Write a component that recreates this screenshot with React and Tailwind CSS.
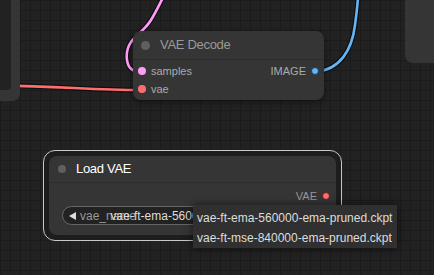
export default function App() {
    return (
        <div className="relative w-[434px] h-[275px] overflow-hidden bg-[#222222] bg-[image:linear-gradient(to_right,#1b1b1b_1px,transparent_1px),linear-gradient(to_bottom,#1b1b1b_1px,transparent_1px)] bg-[size:10px_10px] font-['Liberation_Sans',Arial,sans-serif]">
            {/* wires, drawn under the nodes */}
            <svg className="absolute inset-0" width="434" height="275">
                <g fill="none" strokeLinecap="round">
                    <path d="M166 -8 C160 3, 157 10, 151 20 C145 30, 135 36, 131 42 C127 48, 126 53, 127 60 C128 68, 133 72, 141 72" stroke="#000" strokeOpacity="0.55" strokeWidth="5" />
                    <path d="M166 -8 C160 3, 157 10, 151 20 C145 30, 135 36, 131 42 C127 48, 126 53, 127 60 C128 68, 133 72, 141 72" stroke="#ff9cf9" strokeWidth="2.6" />
                    <path d="M315 72 C340 70, 352 50, 355 25 C357 10, 358 0, 358 -5" stroke="#000" strokeOpacity="0.55" strokeWidth="5" />
                    <path d="M315 72 C340 70, 352 50, 355 25 C357 10, 358 0, 358 -5" stroke="#64b5f6" strokeWidth="2.6" />
                    <path d="M0 85.6 C60 86, 90 90, 141 90" stroke="#000" strokeOpacity="0.55" strokeWidth="5" />
                    <path d="M0 85.6 C60 86, 90 90, 141 90" stroke="#ff6e6e" strokeWidth="2.6" />
                </g>
            </svg>

            {/* node cut off on the left */}
            <div className="absolute left-[-10px] top-[-10px] w-[30px] h-[111px] flex pr-[9px] pb-[11px] rounded-br-[8px] bg-[#353535]">
                <div className="flex-1 rounded-br-[4px] bg-[#222222]" />
            </div>

            {/* node cut off on the top right */}
            <div className="absolute left-[405px] top-[-10px] w-[40px] h-[73px] rounded-bl-[8px] bg-[#353535]" />

            {/* VAE Decode */}
            <div className="absolute left-[133px] top-[31px] w-[191px] h-[69px] flex flex-col rounded-[8px] bg-[#353535] shadow-[0_2px_6px_rgba(0,0,0,0.4)]">
                <div className="flex items-center h-[29px] border-b border-[#2d2d2d]">
                    <span className="ml-[8px] w-[9px] h-[9px] rounded-full bg-[#5f5f5f]" />
                    <span className="ml-[10px] text-[13px] tracking-[-0.3px] text-[#999999]">VAE Decode</span>
                </div>
                <div className="flex items-center justify-between h-[18px] mt-[2px]">
                    <div className="flex items-center">
                        <span className="ml-[5px] w-[8px] h-[8px] rounded-full bg-[#ff9cf9]" />
                        <span className="ml-[5px] text-[11px] text-[#aaaaaa]">samples</span>
                    </div>
                    <div className="flex items-center">
                        <span className="text-[11px] text-[#aaaaaa]">IMAGE</span>
                        <span className="ml-[5px] mr-[5px] w-[8px] h-[8px] rounded-full bg-[#64b5f6] border border-[#1d3b55]" />
                    </div>
                </div>
                <div className="flex items-center h-[18px]">
                    <span className="ml-[5px] w-[8px] h-[8px] rounded-full bg-[#ff6e6e]" />
                    <span className="ml-[5px] text-[11px] text-[#aaaaaa]">vae</span>
                </div>
            </div>

            {/* Load VAE (selected) */}
            <div className="absolute left-[43px] top-[150px] w-[299px] h-[91px] flex p-[5px] rounded-[12px] border border-[#c8c8c8] bg-[#1d1d1d]">
                <div className="flex-1 flex flex-col rounded-[8px] bg-[#353535]">
                    <div className="flex items-center h-[27px] border-b border-[#2d2d2d]">
                        <span className="ml-[9px] w-[8px] h-[8px] rounded-full bg-[#5f5f5f]" />
                        <span className="ml-[10px] text-[13px] tracking-[-0.3px] text-white">Load VAE</span>
                    </div>
                    <div className="flex items-center justify-end h-[18px] mt-[4px]">
                        <span className="text-[11px] text-[#999999]">VAE</span>
                        <span className="ml-[5px] mr-[6px] w-[8px] h-[8px] rounded-full bg-[#ff6e6e] border border-[#5a2020]" />
                    </div>
                    <div className="relative flex items-center h-[19px] mx-[13px] mt-[1px] rounded-full border border-[#666666] bg-[#222222]">
                        <svg className="ml-[6px]" width="7" height="8" viewBox="0 0 7 8">
                            <polygon points="0,4 7,0 7,8" fill="#dddddd" />
                        </svg>
                        <span className="ml-[4px] text-[12px] text-[#999999]">vae_name</span>
                        <span className="absolute right-[16px] top-1/2 -translate-y-1/2 whitespace-nowrap text-[12px] text-[#dddddd]">vae-ft-ema-560000-ema-pruned.ckpt</span>
                        <svg className="absolute right-[6px] top-1/2 -translate-y-1/2" width="7" height="8" viewBox="0 0 7 8">
                            <polygon points="7,4 0,0 0,8" fill="#dddddd" />
                        </svg>
                    </div>
                </div>
            </div>

            {/* combo dropdown */}
            <div className="absolute left-[193px] top-[205px] w-[204px] h-[43px] pt-[3px] bg-[#303030] shadow-[0_0_8px_rgba(0,0,0,0.6)] text-[12px] text-[#dddddd]">
                <div className="flex items-center h-[20px] pl-[4px] whitespace-nowrap">vae-ft-ema-560000-ema-pruned.ckpt</div>
                <div className="flex items-center h-[20px] pl-[4px] whitespace-nowrap">vae-ft-mse-840000-ema-pruned.ckpt</div>
            </div>
        </div>
    )
}
